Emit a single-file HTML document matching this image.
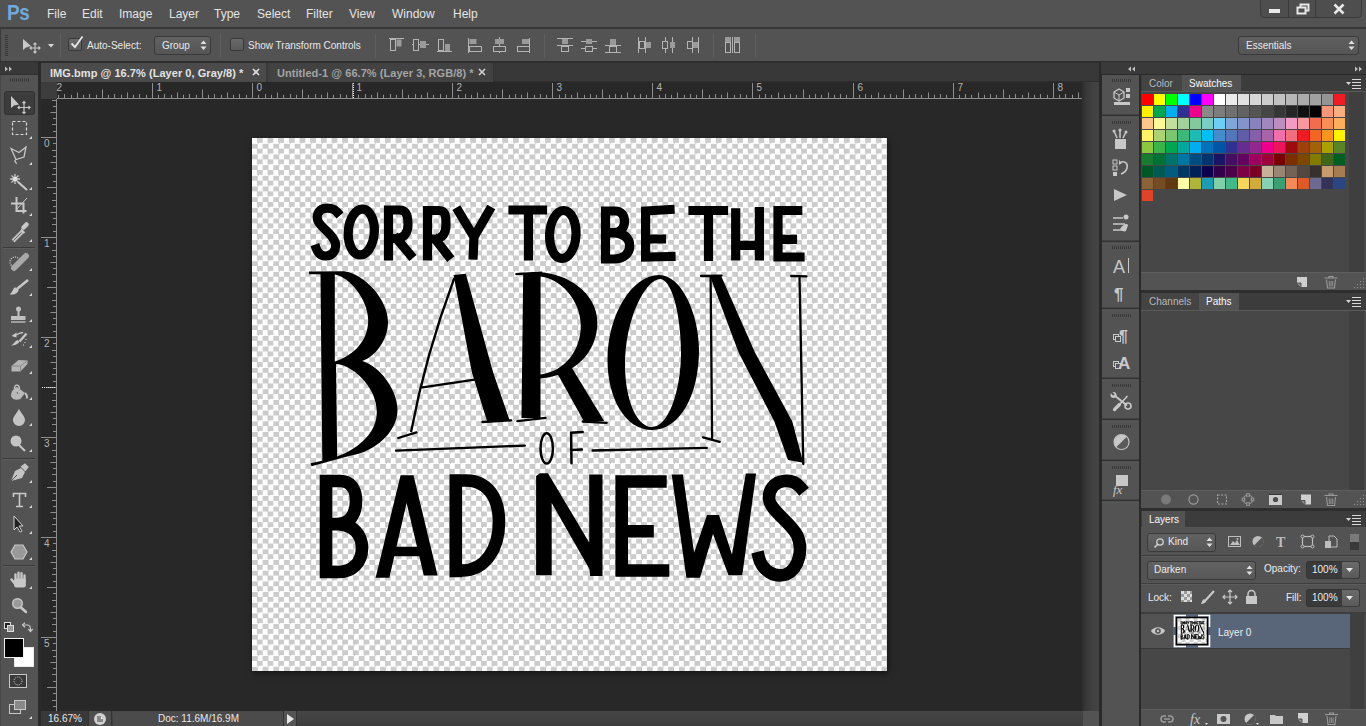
<!DOCTYPE html>
<html><head><meta charset="utf-8">
<style>
*{margin:0;padding:0;box-sizing:border-box}
html,body{width:1366px;height:726px;overflow:hidden;background:#535353;font-family:"Liberation Sans",sans-serif;color:#e6e6e6}
.a{position:absolute}
svg{position:absolute;overflow:visible}
#menubar{left:0;top:0;width:1366px;height:28px;background:#535353}
.mi{position:absolute;top:7px;font-size:12px;color:#e4e4e4}
#optbar{left:0;top:29px;width:1366px;height:33px;background:#535353}
.ot{position:absolute;font-size:10px;color:#e8e8e8}
.vsep{position:absolute;width:1px;background:#3a3a3a;border-right:1px solid #5e5e5e}
#toolbar{left:0;top:62px;width:38px;height:664px;background:#535353}
#docwin{left:41px;top:62px;width:1058px;height:664px;background:#282828}
#tabbar{left:41px;top:62px;width:1058px;height:20px;background:#3a3a3a}
#hruler{left:41px;top:82px;width:1042px;height:17px;background:#282828}
#vruler{left:41px;top:82px;width:16px;height:629px;background:#282828}
#corner{left:41px;top:82px;width:16px;height:17px;background:#3c3c3c}
#vscroll{left:1082px;top:82px;width:17px;height:629px;background:linear-gradient(90deg,#2c2c2c,#383838 25%,#404040 60%,#444)}
#status{left:41px;top:711px;width:1042px;height:15px;background:linear-gradient(#474747,#3c3c3c)}
#doc{left:252px;top:138px;width:635px;height:533px;background:repeating-conic-gradient(#cbcbcb 0 25%,#fff 0 50%) 0 0/10.685px 10.685px;box-shadow:1px 2px 6px rgba(0,0,0,.55)}
#dock{left:1099px;top:62px;width:267px;height:664px;background:#2a2a2a}
#dockhead{left:1101px;top:62px;width:265px;height:12px;background:#393939}
#iconstrip{left:1102px;top:75px;width:37px;height:651px;background:#535353}
#panels{left:1141px;top:75px;width:225px;height:651px;background:#535353}
</style></head><body>
<!-- MENU BAR -->
<div class="a" id="menubar">
<span class="mi" style="left:7px;top:0px;font-size:22px;font-weight:bold;color:#72a8dc;letter-spacing:-0.5px;transform:scaleX(0.86);transform-origin:0 0">Ps</span>
<span class="mi" style="left:47px">File</span>
<span class="mi" style="left:82px">Edit</span>
<span class="mi" style="left:119px">Image</span>
<span class="mi" style="left:169px">Layer</span>
<span class="mi" style="left:214px">Type</span>
<span class="mi" style="left:257px">Select</span>
<span class="mi" style="left:306px">Filter</span>
<span class="mi" style="left:349px">View</span>
<span class="mi" style="left:392px">Window</span>
<span class="mi" style="left:453px">Help</span>
<!-- window buttons -->
<div class="a" style="left:1260px;top:-2px;width:102px;height:20px;background:#4e4e4e;border:1px solid #3a3a3a;border-radius:0 0 4px 4px"></div>
<div class="a" style="left:1288px;top:0;width:1px;height:18px;background:#3a3a3a"></div>
<div class="a" style="left:1315px;top:0;width:1px;height:18px;background:#3a3a3a"></div>
<div class="a" style="left:1269px;top:9px;width:11px;height:4px;background:#e8e8e8"></div>
<svg style="left:1296px;top:3px" width="14" height="12"><rect x="4.5" y="1.5" width="8" height="6" fill="none" stroke="#e8e8e8" stroke-width="2"/><rect x="1.5" y="4.5" width="8" height="6" fill="#4e4e4e" stroke="#e8e8e8" stroke-width="2"/></svg>
<svg style="left:1333px;top:3px" width="12" height="12"><path d="M1.5 1.5L10.5 10.5M10.5 1.5L1.5 10.5" stroke="#e8e8e8" stroke-width="2.5"/></svg>
</div>
<div class="a" style="left:0;top:27px;width:1366px;height:2px;background:#383838"></div>
<div class="a" style="left:0;top:29px;width:1366px;height:1px;background:#5a5a5a"></div>
<!-- OPTIONS BAR -->
<div class="a" id="optbar">
<svg style="left:5px;top:6px" width="4" height="22"><path d="M0 0.5h3M0 2.5h3M0 4.5h3M0 6.5h3M0 8.5h3M0 10.5h3M0 12.5h3M0 14.5h3M0 16.5h3M0 18.5h3M0 20.5h3" stroke="#383838" stroke-width="1"/></svg><div class="a" style="left:0;top:0;width:1px;height:33px;background:#3a3a3a"></div>
<svg style="left:22px;top:9px" width="20" height="16"><path d="M1 1L1 12L4 9.5L9 8Z" fill="#c8c8c8"/><path d="M13 5v10M8 10h10M11.5 6.5L13 5L14.5 6.5M11.5 13.5L13 15L14.5 13.5M9.5 8.5L8 10L9.5 11.5M16.5 8.5L18 10L16.5 11.5" stroke="#c8c8c8" stroke-width="1.1" fill="none"/></svg>
<svg style="left:48px;top:15px" width="7" height="4"><path d="M0 0h6L3 3.5Z" fill="#d8d8d8"/></svg>
<div class="vsep" style="left:60px;top:5px;height:24px"></div>
<div class="a" style="left:68px;top:9px;width:14px;height:13px;background:linear-gradient(#6a6a6a,#5a5a5a);border:1px solid #3a3a3a;border-radius:2px"></div>
<svg style="left:69px;top:5px" width="16" height="16"><path d="M2.5 9.5L6 13L13.5 2.5" stroke="#e8e8e8" stroke-width="1.8" fill="none"/></svg>
<span class="ot" style="left:87px;top:11px">Auto-Select:</span>
<div class="a" style="left:154px;top:7px;width:57px;height:19px;background:linear-gradient(#626262,#555);border:1px solid #3a3a3a;border-radius:3px"></div>
<span class="ot" style="left:162px;top:11px">Group</span>
<svg style="left:200px;top:11px" width="7" height="11"><path d="M0.5 4L3.5 0.5L6.5 4ZM0.5 6.5L3.5 10L6.5 6.5Z" fill="#e0e0e0"/></svg>
<div class="vsep" style="left:220px;top:5px;height:24px"></div>
<div class="a" style="left:230px;top:9px;width:14px;height:13px;background:linear-gradient(#6a6a6a,#5a5a5a);border:1px solid #3a3a3a;border-radius:2px"></div>
<span class="ot" style="left:248px;top:11px">Show Transform Controls</span>
<div class="vsep" style="left:375px;top:5px;height:24px"></div>
<svg style="left:386px;top:8px" width="160" height="16" fill="none" stroke="#b4b4b4" stroke-width="1">
 <path d="M3 1.5h15"/><rect x="4.5" y="2.5" width="5" height="11"/><rect x="10.5" y="2.5" width="5" height="7" fill="#9a9a9a" stroke="none"/>
 <path d="M26 7.5h17"/><rect x="27.5" y="2.5" width="5" height="11" fill="#535353"/><rect x="34" y="4" width="6" height="7" fill="#9a9a9a" stroke="none"/>
 <path d="M51 14.5h15"/><rect x="52.5" y="2.5" width="5" height="11"/><rect x="59" y="7" width="5" height="7" fill="#9a9a9a" stroke="none"/>
 <path d="M82.5 1v15"/><rect x="83.5" y="2" width="7" height="5" fill="#9a9a9a" stroke="none"/><rect x="83.5" y="9.5" width="12" height="5"/>
 <path d="M113.5 0v16"/><rect x="109" y="2" width="9" height="5" fill="#9a9a9a" stroke="none"/><rect x="107.5" y="9.5" width="12" height="5" fill="#535353"/>
 <path d="M143.5 1v15"/><rect x="136" y="2" width="7" height="5" fill="#9a9a9a" stroke="none"/><rect x="131.5" y="9.5" width="12" height="5"/>
</svg>
<div class="vsep" style="left:544px;top:5px;height:24px"></div>
<svg style="left:556px;top:8px" width="200" height="16" fill="none" stroke="#b4b4b4" stroke-width="1">
 <path d="M1 1.5h16M1 8.5h16"/><rect x="6" y="2" width="6" height="5" fill="#9a9a9a" stroke="none"/><rect x="5.5" y="9.5" width="7" height="5"/>
 <path d="M25 4.5h16M25 11.5h16"/><rect x="30" y="2" width="6" height="5" fill="#9a9a9a" stroke="none"/><rect x="29.5" y="9.5" width="7" height="5" fill="#535353"/>
 <path d="M49 8.5h16M49 15.5h16"/><rect x="54" y="2" width="6" height="6" fill="#9a9a9a" stroke="none"/><rect x="53.5" y="9.5" width="7" height="6"/>
 <path d="M82.5 0v16M89.5 0v16"/><rect x="83.5" y="4.5" width="5" height="7"/><rect x="90" y="5" width="5" height="6" fill="#9a9a9a" stroke="none"/>
 <path d="M109.5 0v16M116.5 0v16"/><rect x="106.5" y="4.5" width="5" height="7" fill="#535353"/><rect x="114" y="5" width="5" height="6" fill="#9a9a9a" stroke="none"/>
 <path d="M136.5 0v16M142.5 0v16"/><rect x="131.5" y="4.5" width="5" height="7"/><rect x="137" y="5" width="5" height="6" fill="#9a9a9a" stroke="none"/>
</svg>
<div class="vsep" style="left:713px;top:5px;height:24px"></div>
<svg style="left:724px;top:7px" width="20" height="18" fill="none" stroke="#b4b4b4" stroke-width="1">
 <rect x="1" y="1" width="6" height="5" fill="#9a9a9a" stroke="none"/><rect x="10" y="1" width="6" height="5" fill="#9a9a9a" stroke="none"/>
 <rect x="1.5" y="6.5" width="5" height="10"/><rect x="10.5" y="6.5" width="5" height="10"/><path d="M8.5 1v16"/>
</svg>
<div class="vsep" style="left:755px;top:5px;height:24px"></div>
<div class="a" style="left:1238px;top:7px;width:121px;height:19px;background:linear-gradient(#606060,#555);border:1px solid #3a3a3a;border-radius:3px"></div>
<span class="ot" style="left:1246px;top:11px">Essentials</span>
<svg style="left:1348px;top:11px" width="7" height="11"><path d="M0.5 4L3.5 0.5L6.5 4ZM0.5 6.5L3.5 10L6.5 6.5Z" fill="#e0e0e0"/></svg>
</div>
<div class="a" style="left:0;top:61px;width:1366px;height:1px;background:#2e2e2e"></div>


<!-- TOOLBAR -->
<div class="a" style="left:0;top:62px;width:38px;height:664px;background:#535353;border-left:1px solid #484848"></div>
<div class="a" style="left:0;top:62px;width:38px;height:13px;background:#383838;border-bottom:1px solid #2f2f2f"></div>
<svg style="left:0;top:0" width="38" height="726">
<path d="M5 66.5l3 2.5-3 2.5zM9 66.5l3 2.5-3 2.5z" fill="#bdbdbd"/>
<path d="M10.5 78.5v3M12.5 78.5v3M14.5 78.5v3M16.5 78.5v3M18.5 78.5v3M20.5 78.5v3M22.5 78.5v3M24.5 78.5v3M26.5 78.5v3M28.5 78.5v3" stroke="#383838" stroke-width="1"/>
<path d="M3 247.5h32M3 458.5h32M3 565.5h32" stroke="#3a3a3a"/><path d="M3 248.5h32M3 459.5h32M3 566.5h32" stroke="#5c5c5c"/>
<rect x="4.5" y="91.5" width="30" height="23" rx="2" fill="#3c3c3c" stroke="#303030"/>
<g fill="#c8c8c8">
<path d="M29 139h3v-3zM29 165h3v-3zM29 190h3v-3zM29 216h3v-3zM29 242h3v-3zM29 271h3v-3zM29 296h3v-3zM29 322h3v-3zM29 348h3v-3zM29 374h3v-3zM29 400h3v-3zM29 426h3v-3zM29 452h3v-3zM29 483h3v-3zM29 508h3v-3zM29 534h3v-3zM29 560h3v-3zM29 589h3v-3z" fill="#d8d8d8"/>
<!-- move -->
<path d="M11 96v12l3-2.5 5-1z"/>
</g>
<g fill="none" stroke="#c8c8c8" stroke-width="1.2">
<path d="M24 101.5v12M18 107.5h12M22.5 103l1.5-1.5 1.5 1.5M22.5 112l1.5 1.5 1.5-1.5M19.5 106l-1.5 1.5 1.5 1.5M28.5 106l1.5 1.5-1.5 1.5"/>
<!-- marquee -->
<rect x="12.5" y="121.5" width="14" height="13" stroke-dasharray="3 2" stroke="#d8d8d8"/>
<!-- lasso -->
<path d="M11 148.5l8 4 7-5.5-2 10-8 2.5zM16 159.5c-2 1-1 3 1 4" stroke-width="1.3"/>
<!-- wand -->
<path d="M18 182l9 8" stroke-width="2.2"/>
<path d="M15 174v10M10 179h10M11.5 175.5l7 7M18.5 175.5l-7 7" stroke-width="1.3"/><circle cx="15" cy="179" r="2.2" fill="#e0e0e0" stroke="none"/>
<!-- crop -->
<path d="M16.5 197v14h10M11 203.5h12.5v10" stroke-width="2"/>
<path d="M27 198l-11 12" stroke-width="1"/>
<!-- eyedropper -->
<path d="M13 241l9.5-9.5" stroke-width="4" stroke="#c0c0c0"/>
<path d="M13.5 240.5l8-8" stroke-width="1" stroke="#666"/>
<path d="M21 229.5l3.5 3.5" stroke-width="2" stroke="#c8c8c8"/>
<path d="M23.5 227.5l3-3" stroke-width="4.5" stroke-linecap="round"/>
<!-- healing -->
<circle cx="15" cy="262" r="5" stroke-dasharray="1 1.3" stroke="#e0e0e0"/>
<path d="M14 268l12-12" stroke-width="6" stroke-linecap="round" stroke="#a8a8a8"/>
<!-- brush -->
<path d="M17 289l11-9" stroke-width="2.5"/>
<path d="M11 294c3 0 6-1 7-4l-3-2c-2 2-2 4-4 6z" fill="#c8c8c8"/>
<!-- stamp -->
<circle cx="18.5" cy="309" r="2.5" fill="#c0c0c0" stroke="none"/><path d="M18.5 310v6" stroke-width="2" stroke="#c0c0c0"/>
<rect x="11" y="316" width="14.5" height="4" fill="#c0c0c0" stroke="none"/><path d="M11 322h14.5" stroke="#d0d0d0"/>
<!-- history -->
<path d="M11.5 336L16.5 332.5L16.5 337.5Z" fill="#c8c8c8" stroke="none"/><path d="M16 335Q19 333 23 332.5" stroke-width="1.3"/>
<path d="M26.5 333.5L19.5 341.5" stroke-width="2.2"/><path d="M11 345.5C14 345.5 18 344.5 19.5 341.5L17.5 340C15 341 14 344 11 345.5Z" fill="#c8c8c8" stroke="none"/>
<path d="M26 339v1M25 342v1M23.5 344.5v1" stroke-width="1" stroke="#dcdcdc"/>
<!-- eraser -->
<path d="M11.5 366L18.5 360L27.5 360.5L27.5 364L20.5 371.5L11.5 371.5Z" fill="#b4b4b4" stroke="none"/><path d="M11.5 366H20.5L27.5 360.5M20.5 366V371.5" stroke="#8a8a8a" stroke-width="1"/>
<!-- bucket -->
<path d="M11 396C11 391 14 388.5 17 387L25 393L20.5 399C16 400.5 12 399.5 11 396Z" fill="#b8b8b8" stroke="none"/>
<path d="M14.5 389C14 384 19.5 383.5 19.5 389" stroke-width="1.3"/><path d="M25 393C27 395 27.5 397 26.5 398.5" stroke-width="1.8"/><path d="M17 392l1 2" stroke="#666" stroke-width="1"/>
<!-- drop -->
<path d="M19 409c-3 5-6 8-6 11a6 6 0 0 0 12 0c0-3-3-6-6-11z" fill="#c4c4c4" stroke="none"/>
<!-- dodge -->
<circle cx="16" cy="441" r="5.5" fill="#c4c4c4" stroke="none"/><path d="M19 445l6 6" stroke-width="2"/>
<!-- pen -->
<path d="M11 481l4-10 6-3 4 4-3 6z" fill="#c4c4c4" stroke="none"/><path d="M21 467l4-3 3 3-3 4" fill="#c4c4c4" stroke="#c4c4c4"/><path d="M11 481l6-6" stroke="#535353" stroke-width="1"/>
<!-- type -->
<path d="M13.5 497v-3.5h12v3.5M19.5 493.5v13M16 506.5h7" stroke-width="1.6"/>
<!-- path select -->
<path d="M14 516v14l3-3 3 5 2-1-3-5h4z" fill="#222" stroke="#d0d0d0" stroke-width="1"/>
<!-- shape -->
<path d="M15 545h8l4 7-4 7h-8l-4-7z" fill="#9a9a9a" stroke="#c8c8c8"/>
<!-- hand -->
<path d="M15.5 581V574.5M18.5 581V572.8M21.5 581V573.3M24.5 581V575.5" stroke-width="2.4" stroke-linecap="round"/>
<rect x="14.2" y="578.5" width="11.6" height="9" rx="2" fill="#c8c8c8" stroke="none"/><path d="M15.5 584.5L11.5 579.5" stroke-width="2.4" stroke-linecap="round"/>
<!-- zoom -->
<circle cx="17.5" cy="603.5" r="4.8" fill="#9a9a9a" stroke="#c8c8c8" stroke-width="1.4"/><path d="M21 607.5l5 4.5" stroke-width="2.6" stroke-linecap="round"/>
<!-- default colors -->
<rect x="4.5" y="622.5" width="6" height="6" fill="#222" stroke="#ddd" stroke-width="1"/><rect x="7.5" y="625.5" width="6" height="6" fill="#999" stroke="#ddd" stroke-width="1"/>
<path d="M23.5 625H27C29.5 625 30.5 626.5 30.5 629V631" stroke-width="1.2"/><path d="M25 622.8L22.5 625L25 627.2M28.3 629L30.5 631.5L32.7 629" stroke-width="1.2"/>
</g>
<!-- fg/bg -->
<rect x="14.5" y="647.5" width="19" height="19" fill="#fff" stroke="#e8e8e8"/>
<rect x="4.5" y="638.5" width="19" height="19" fill="#000" stroke="#f0f0f0"/>
<!-- quick mask -->
<rect x="9.5" y="674.5" width="17" height="13" fill="#3a3a3a" stroke="#c8c8c8"/><circle cx="18" cy="681" r="4" fill="none" stroke="#e0e0e0" stroke-dasharray="1 1.2"/>
<!-- screen mode -->
<rect x="9.5" y="704.5" width="11" height="9" fill="#555" stroke="#c8c8c8"/><rect x="14.5" y="700.5" width="11" height="9" fill="#888" stroke="#c8c8c8"/>
<path d="M29 719h3v-3z" fill="#d8d8d8"/>
</svg>

<!-- DOC WINDOW -->
<div class="a" style="left:38px;top:62px;width:3px;height:664px;background:#2b2b2b"></div>
<div class="a" style="left:41px;top:62px;width:1058px;height:664px;background:#282828"></div>
<div class="a" style="left:41px;top:62px;width:1058px;height:20px;background:#383838;border-top:1px solid #2e2e2e;border-bottom:1px solid #2e2e2e"></div>
<div class="a" style="left:41px;top:63px;width:226px;height:19px;background:#4b4b4b;border-right:1px solid #3a3a3a"></div>
<div class="a" style="left:268px;top:63px;width:226px;height:19px;background:#424242;border-right:1px solid #333"></div>
<span class="a" style="left:50px;top:67px;font-size:11px;font-weight:bold;color:#e2e2e2;letter-spacing:0.05px">IMG.bmp @ 16.7% (Layer 0, Gray/8) *</span>
<span class="a" style="left:277px;top:67px;font-size:11px;font-weight:bold;color:#a4a4a4;letter-spacing:0.05px">Untitled-1 @ 66.7% (Layer 3, RGB/8) *</span>
<svg style="left:252px;top:68px" width="9" height="9"><path d="M1 1l6 6M7 1l-6 6" stroke="#e0e0e0" stroke-width="1.6"/></svg>
<svg style="left:478px;top:68px" width="9" height="9"><path d="M1 1l6 6M7 1l-6 6" stroke="#d0d0d0" stroke-width="1.6"/></svg>
<div class="a" style="left:41px;top:82px;width:16px;height:17px;background:#3d3d3d"></div>
<svg style="left:0;top:0" width="1100" height="100"><path d="M58.5 94.8V98M64.5 94V98M71.5 94.8V98M77.5 92.5V98M83.5 94.8V98M89.5 94V98M96.5 94.8V98M102.5 89.5V98M108.5 94.8V98M114.5 94V98M121.5 94.8V98M127.5 92.5V98M133.5 94.8V98M139.5 94V98M146.5 94.8V98M152.5 83V98M158.5 94.8V98M164.5 94V98M171.5 94.8V98M177.5 92.5V98M183.5 94.8V98M189.5 94V98M196.5 94.8V98M202.5 89.5V98M208.5 94.8V98M214.5 94V98M221.5 94.8V98M227.5 92.5V98M233.5 94.8V98M239.5 94V98M246.5 94.8V98M252.5 83V98M258.5 94.8V98M265.5 94V98M271.5 94.8V98M277.5 92.5V98M283.5 94.8V98M290.5 94V98M296.5 94.8V98M302.5 89.5V98M308.5 94.8V98M315.5 94V98M321.5 94.8V98M327.5 92.5V98M333.5 94.8V98M340.5 94V98M346.5 94.8V98M352.5 83V98M358.5 94.8V98M365.5 94V98M371.5 94.8V98M377.5 92.5V98M383.5 94.8V98M390.5 94V98M396.5 94.8V98M402.5 89.5V98M408.5 94.8V98M415.5 94V98M421.5 94.8V98M427.5 92.5V98M433.5 94.8V98M440.5 94V98M446.5 94.8V98M452.5 83V98M458.5 94.8V98M465.5 94V98M471.5 94.8V98M477.5 92.5V98M483.5 94.8V98M490.5 94V98M496.5 94.8V98M502.5 89.5V98M509.5 94.8V98M515.5 94V98M521.5 94.8V98M527.5 92.5V98M534.5 94.8V98M540.5 94V98M546.5 94.8V98M552.5 83V98M559.5 94.8V98M565.5 94V98M571.5 94.8V98M577.5 92.5V98M584.5 94.8V98M590.5 94V98M596.5 94.8V98M602.5 89.5V98M609.5 94.8V98M615.5 94V98M621.5 94.8V98M627.5 92.5V98M634.5 94.8V98M640.5 94V98M646.5 94.8V98M652.5 83V98M659.5 94.8V98M665.5 94V98M671.5 94.8V98M677.5 92.5V98M684.5 94.8V98M690.5 94V98M696.5 94.8V98M702.5 89.5V98M709.5 94.8V98M715.5 94V98M721.5 94.8V98M727.5 92.5V98M734.5 94.8V98M740.5 94V98M746.5 94.8V98M752.5 83V98M759.5 94.8V98M765.5 94V98M771.5 94.8V98M778.5 92.5V98M784.5 94.8V98M790.5 94V98M796.5 94.8V98M803.5 89.5V98M809.5 94.8V98M815.5 94V98M821.5 94.8V98M828.5 92.5V98M834.5 94.8V98M840.5 94V98M846.5 94.8V98M853.5 83V98M859.5 94.8V98M865.5 94V98M871.5 94.8V98M878.5 92.5V98M884.5 94.8V98M890.5 94V98M896.5 94.8V98M903.5 89.5V98M909.5 94.8V98M915.5 94V98M921.5 94.8V98M928.5 92.5V98M934.5 94.8V98M940.5 94V98M946.5 94.8V98M953.5 83V98M959.5 94.8V98M965.5 94V98M971.5 94.8V98M978.5 92.5V98M984.5 94.8V98M990.5 94V98M996.5 94.8V98M1003.5 89.5V98M1009.5 94.8V98M1015.5 94V98M1022.5 94.8V98M1028.5 92.5V98M1034.5 94.8V98M1040.5 94V98M1047.5 94.8V98M1053.5 83V98M1059.5 94.8V98M1065.5 94V98M1072.5 94.8V98M1078.5 92.5V98" stroke="#8e8e8e" stroke-width="1"/><path d="M57 98.5H1083" stroke="#8e8e8e"/><text x="56.5" y="91" font-size="10" fill="#b4b4b4" font-family="Liberation Sans">2</text><text x="156.5" y="91" font-size="10" fill="#b4b4b4" font-family="Liberation Sans">1</text><text x="256.5" y="91" font-size="10" fill="#b4b4b4" font-family="Liberation Sans">0</text><text x="356.5" y="91" font-size="10" fill="#b4b4b4" font-family="Liberation Sans">1</text><text x="456.5" y="91" font-size="10" fill="#b4b4b4" font-family="Liberation Sans">2</text><text x="556.5" y="91" font-size="10" fill="#b4b4b4" font-family="Liberation Sans">3</text><text x="656.5" y="91" font-size="10" fill="#b4b4b4" font-family="Liberation Sans">4</text><text x="756.5" y="91" font-size="10" fill="#b4b4b4" font-family="Liberation Sans">5</text><text x="857.5" y="91" font-size="10" fill="#b4b4b4" font-family="Liberation Sans">6</text><text x="957.5" y="91" font-size="10" fill="#b4b4b4" font-family="Liberation Sans">7</text><text x="1057.5" y="91" font-size="10" fill="#b4b4b4" font-family="Liberation Sans">8</text></svg>
<svg style="left:0;top:0" width="60" height="726"><path d="M52 100.5H56M53 106.5H56M50.5 112.5H56M53 118.5H56M52 124.5H56M53 131.5H56M41 137.5H56M53 143.5H56M52 150.5H56M53 156.5H56M50.5 162.5H56M53 168.5H56M52 174.5H56M53 181.5H56M47 187.5H56M53 193.5H56M52 200.5H56M53 206.5H56M50.5 212.5H56M53 218.5H56M52 224.5H56M53 231.5H56M41 237.5H56M53 243.5H56M52 250.5H56M53 256.5H56M50.5 262.5H56M53 268.5H56M52 274.5H56M53 281.5H56M47 287.5H56M53 293.5H56M52 300.5H56M53 306.5H56M50.5 312.5H56M53 318.5H56M52 324.5H56M53 331.5H56M41 337.5H56M53 343.5H56M52 350.5H56M53 356.5H56M50.5 362.5H56M53 368.5H56M52 374.5H56M53 381.5H56M47 387.5H56M53 393.5H56M52 400.5H56M53 406.5H56M50.5 412.5H56M53 418.5H56M52 424.5H56M53 431.5H56M41 437.5H56M53 443.5H56M52 450.5H56M53 456.5H56M50.5 462.5H56M53 468.5H56M52 474.5H56M53 481.5H56M47 487.5H56M53 493.5H56M52 500.5H56M53 506.5H56M50.5 512.5H56M53 518.5H56M52 524.5H56M53 531.5H56M41 537.5H56M53 543.5H56M52 550.5H56M53 556.5H56M50.5 562.5H56M53 568.5H56M52 574.5H56M53 581.5H56M47 587.5H56M53 593.5H56M52 600.5H56M53 606.5H56M50.5 612.5H56M53 618.5H56M52 624.5H56M53 631.5H56M41 637.5H56M53 643.5H56M52 650.5H56M53 656.5H56M50.5 662.5H56M53 668.5H56M52 674.5H56M53 681.5H56M47 687.5H56M53 693.5H56M52 700.5H56M53 706.5H56" stroke="#8e8e8e" stroke-width="1"/><path d="M56.5 99V711" stroke="#8e8e8e"/><text x="44" y="147.0" font-size="10" fill="#b4b4b4" font-family="Liberation Sans">0</text><text x="44" y="247.0" font-size="10" fill="#b4b4b4" font-family="Liberation Sans">1</text><text x="44" y="347.0" font-size="10" fill="#b4b4b4" font-family="Liberation Sans">2</text><text x="44" y="447.0" font-size="10" fill="#b4b4b4" font-family="Liberation Sans">3</text><text x="44" y="547.0" font-size="10" fill="#b4b4b4" font-family="Liberation Sans">4</text><text x="44" y="647.0" font-size="10" fill="#b4b4b4" font-family="Liberation Sans">5</text></svg>

<svg style="left:0;top:0" width="400" height="400"><path d="M353.5 83V98" stroke="#f0f0f0" stroke-dasharray="1 1"/><path d="M42 387.5H56" stroke="#f0f0f0" stroke-dasharray="1 1"/></svg>
<div class="a" id="vscroll"></div>
<div class="a" style="left:41px;top:711px;width:1042px;height:15px;background:linear-gradient(#464646,#3d3d3d)"></div>
<div class="a" style="left:41px;top:711px;width:47px;height:15px;background:#393939"></div>
<div class="a" style="left:88px;top:711px;width:24px;height:15px;background:#4e4e4e;border-left:1px solid #333;border-right:1px solid #333"></div>
<div class="a" style="left:113px;top:711px;width:170px;height:15px;background:#4b4b4b"></div>
<div class="a" style="left:283px;top:711px;width:14px;height:15px;background:#555;border-left:1px solid #333;border-right:1px solid #333"></div>
<div class="a" style="left:1083px;top:711px;width:16px;height:15px;background:#535353"></div>
<span class="a" style="left:48px;top:713px;font-size:10px;color:#e8e8e8">16.67%</span>
<svg style="left:93px;top:712px" width="14" height="14"><circle cx="7" cy="7" r="6" fill="#d0d0d0"/><path d="M4 4h4l2 2v4H4z" fill="#888"/><path d="M8 4v3h2" fill="#fff"/></svg>
<span class="a" style="left:158px;top:713px;font-size:10px;color:#e8e8e8">Doc: 11.6M/16.9M</span>
<svg style="left:286px;top:713px" width="10" height="12"><path d="M1 1v10l7-5z" fill="#e8e8e8"/></svg>

<!-- DOCUMENT -->
<div class="a" id="doc"></div>
<svg style="left:0;top:0" width="1366" height="726"><g id="letters">
<g fill="none" stroke="#000" stroke-width="9.2" stroke-linecap="square" stroke-linejoin="miter" stroke-miterlimit="3">
<path d="M337 212C334 208.5 328 207.5 324 208.5C318 210 316 216 318 221C321 228 332 233 335 242C337.5 250 332 256 326 256C321 256 318 253 316.5 249"/>
<ellipse cx="361.3" cy="232" rx="13" ry="23" transform="rotate(4 361.3 232)"/>
<path d="M388.5 256V210H400C406 210 408 215 408 224.5C408 234 403 238.5 396 238.5H388.5M397 239L410 254.5"/>
<path d="M427.5 256V210.5H439C445 210.5 446 215 446 224.5C446 234 442 239 435 239H427.5M436 240L448 255.5"/>
<path d="M458.7 211.5L474 237L489 211M474 237L473.2 255"/>
<path d="M513 210H542.5M528.5 210V256"/>
<ellipse cx="562.8" cy="234.5" rx="13.2" ry="24" transform="rotate(3 562.8 234.5)"/>
<path d="M605.5 259V211H615C621 211 624.5 215 624.5 221.5C624.5 228 620 232.6 614 232.6H606M614 232.6C624 232.6 629.7 238 629.7 246C629.7 254 623 259 614 259H605.5"/>
<path d="M670 209.5L645.6 211V257L671 256.5M645.6 239H661.5"/>
<path d="M693 210.5H723.5M708.5 210.5V256.5"/>
<path d="M735.7 212.8V256M759.4 211.5V256M735.7 245.4H759.4"/>
<path d="M797.7 210.5H778V257H800M778 239.4H792.5"/>
</g>
<g fill="none" stroke="#000" stroke-width="12.6" stroke-linecap="square" stroke-linejoin="miter" stroke-miterlimit="3">
<path d="M326 572V481H340C351 481 356 489 356 501C356 515 349 524 338 524H327M338 524C353 524 362 535 362 548C362 563 352 572 338 572H326"/>

<path d="M455.8 571V480.5H466C487 480.5 499 497 499 522C499 549 485 570.5 462 570.5H455.8"/>

<path d="M660.4 481.5H621.7V570.5H663M621.7 531.3H647.5"/>

<path d="M800 487C795 481 789 480.5 784 481C774 482 768.5 490 769 499C770 510 790 522 797 535C803 548 800 568 786 574.5C774 578 762 570 759 558"/>
</g>
<g fill="#000">
<path fill-rule="evenodd" d="M400.6 475.3L413.5 475.3L437.6 575.5L423.8 575.5L419.3 556.3L394.3 556.3L389.4 577.8L375.6 577.8Z M406.6 502.9L417 546.8L396.5 546.8Z"/>
<path d="M536.1 476L540 473.2L548 473.2L589.2 542.5L589.2 474.5L602.5 474.5L602.5 576L590 576L589.4 569L551.7 503L551.7 575.2L536.1 575.2Z"/>
<path d="M671.7 474.5L682.9 474.5L694.1 552.8L707 515L719 515L732 554.5L745.8 473.6L756.1 473.6L742.3 575.2L728.5 575.2L713 533.9L700 577.8L686.4 577.8Z"/>
<path fill-rule="evenodd" d="M309 271.5L344 271.3C365 274 388 300 388 322C388 340 375 357 362 361C380 366 397.5 390 397.5 410C397.5 432 375 452 349 456L311.5 466.2L310.5 463.3L322.3 460.7L320.5 274.3L309 274.2Z M334.8 274.5C350 277 368 300 368.2 320C368.2 340 355 355 334.8 361.5Z M336 364C350 364 376.8 385 376.8 412C376.8 432 360 448 337.2 456.5Z"/>
<path d="M453.6 275L465.8 273.8L493 372L509.7 420.6L487 421L471.8 372Z"/>
<path d="M523.2 273.5L540.6 273L540.5 418L521.5 418Z"/>
<path d="M540 272.6C565 273 597.4 292 597.4 322.6C597.4 352 575 376 540 378.5L540 374.5C565 372 580.8 350 580.8 325.6C580.8 300 560 278 540 276.5Z"/>
<path d="M556.2 371.5L571.1 366.6L604.2 421L584.3 422Z"/>
<path fill-rule="evenodd" d="M659 275C682 275 699 315 699 350C699 395 680 430 652 430C625 430 607.5 398 607.5 360C607.5 315 632 275 659 275Z M660.6 279C673 281 681 318 681 352C681 392 668 427 652 427C636 427 625 398 625 365C625 320 645 279 660.6 279Z"/>
<path d="M709.6 275L720.7 275L755 352.6L792.3 421.5L803.3 462.8L788 460L774.4 421.5L738.6 352.6Z"/>
</g>
<g fill="none" stroke="#000" stroke-width="2.3" stroke-linecap="round">
<path d="M454 279Q425.6 355 411.2 431.2M398.3 438L416.5 432.4M422.6 387.3L474.8 379.7M482.4 422L511.2 420.3"/>
<path d="M516.4 274.1L541.4 272.6M517.4 421.1L545.5 417.8M582.7 421.5L606.7 422.8"/>
<path d="M701 276L721.5 275.6M710.6 276L712.1 438.8M703 437.3L719.7 441.8M799.5 276.4L803.3 464M791.2 276L806.4 276.4"/>
<path d="M396 450.6L524.8 445.6M592.6 450.5L706.8 447.9"/>
<ellipse cx="546.7" cy="448.4" rx="6.2" ry="15.2" stroke-width="2.5"/>
<path d="M571.5 463.3L571.1 432.7L582.7 432M571 450L581.9 449.5" stroke-width="2.5"/>
</g>
</g></svg>

<!-- DOCK -->
<div class="a" style="left:1099px;top:62px;width:267px;height:664px;background:#2a2a2a"></div>
<div class="a" style="left:1101px;top:62px;width:265px;height:12px;background:#3a3a3a"></div>
<svg style="left:1101px;top:62px" width="265" height="12"><path d="M34 4.5l-3 2.5 3 2.5zM30 4.5l-3 2.5 3 2.5z" fill="#c0c0c0"/><path d="M254 4.5l3 2.5-3 2.5zM258 4.5l3 2.5-3 2.5z" fill="#c0c0c0"/></svg>
<div class="a" style="left:1102px;top:75px;width:37px;height:651px;background:#535353"></div>
<svg style="left:1102px;top:0" width="37" height="726"><path d="M0 115.5h37" stroke="#333" stroke-width="2"/><path d="M0 117h37" stroke="#5e5e5e" stroke-width="1"/><path d="M0 241.5h37" stroke="#333" stroke-width="2"/><path d="M0 243h37" stroke="#5e5e5e" stroke-width="1"/><path d="M0 308.5h37" stroke="#333" stroke-width="2"/><path d="M0 310h37" stroke="#5e5e5e" stroke-width="1"/><path d="M0 378.5h37" stroke="#333" stroke-width="2"/><path d="M0 380h37" stroke="#5e5e5e" stroke-width="1"/><path d="M0 419.5h37" stroke="#333" stroke-width="2"/><path d="M0 421h37" stroke="#5e5e5e" stroke-width="1"/><path d="M0 460.5h37" stroke="#333" stroke-width="2"/><path d="M0 462h37" stroke="#5e5e5e" stroke-width="1"/><path d="M0 500.5h37" stroke="#333" stroke-width="2"/><path d="M0 502h37" stroke="#5e5e5e" stroke-width="1"/><path d="M10.5 79v3M12.5 79v3M14.5 79v3M16.5 79v3M18.5 79v3M20.5 79v3M22.5 79v3M24.5 79v3M26.5 79v3M28.5 79v3" stroke="#383838"/><path d="M10.5 121v3M12.5 121v3M14.5 121v3M16.5 121v3M18.5 121v3M20.5 121v3M22.5 121v3M24.5 121v3M26.5 121v3M28.5 121v3" stroke="#383838"/><path d="M10.5 246v3M12.5 246v3M14.5 246v3M16.5 246v3M18.5 246v3M20.5 246v3M22.5 246v3M24.5 246v3M26.5 246v3M28.5 246v3" stroke="#383838"/><path d="M10.5 314v3M12.5 314v3M14.5 314v3M16.5 314v3M18.5 314v3M20.5 314v3M22.5 314v3M24.5 314v3M26.5 314v3M28.5 314v3" stroke="#383838"/><path d="M10.5 384v3M12.5 384v3M14.5 384v3M16.5 384v3M18.5 384v3M20.5 384v3M22.5 384v3M24.5 384v3M26.5 384v3M28.5 384v3" stroke="#383838"/><path d="M10.5 425v3M12.5 425v3M14.5 425v3M16.5 425v3M18.5 425v3M20.5 425v3M22.5 425v3M24.5 425v3M26.5 425v3M28.5 425v3" stroke="#383838"/><path d="M10.5 466v3M12.5 466v3M14.5 466v3M16.5 466v3M18.5 466v3M20.5 466v3M22.5 466v3M24.5 466v3M26.5 466v3M28.5 466v3" stroke="#383838"/><g fill="#c8c8c8" stroke="none">
<path d="M12 92l5-3 5 3v6l-5 3-5-3z" fill="none" stroke="#c8c8c8" stroke-width="1.3"/><path d="M12 92l5 3 5-3M17 95v6" fill="none" stroke="#c8c8c8" stroke-width="1"/>
<rect x="24" y="88" width="4" height="4"/><rect x="24" y="94" width="4" height="4"/><rect x="12" y="102" width="16" height="3"/>
<path d="M13 139h11v10h-11z"/><path d="M15 138l-3-7M18 138v-8M21 138l3-6" stroke="#c8c8c8" stroke-width="1.5" fill="none"/><circle cx="12" cy="131" r="1.5"/><circle cx="18" cy="130" r="1.5"/><circle cx="24" cy="132" r="1.5"/>
<rect x="11" y="160" width="4" height="4" fill="none" stroke="#c8c8c8"/><rect x="11" y="166" width="4" height="4" fill="none" stroke="#c8c8c8"/><rect x="11" y="172" width="4" height="4"/>
<path d="M19 162c5-1 7 2 6 6s-3 5-6 6" fill="none" stroke="#c8c8c8" stroke-width="1.6"/><path d="M17 160l3 3-3 2z"/>
<path d="M12 189l13 6-13 6z"/>
<path d="M11 218h10M11 224h12M11 230h12" stroke="#c8c8c8" stroke-width="1.4"/><circle cx="24" cy="217" r="2.5"/><path d="M18 229c3-5 7-6 8-4l-2 6c-2 1-4 0-6-2z"/>
</g>
<text x="11" y="273" font-size="18" font-family="Liberation Sans" fill="#c8c8c8">A</text><path d="M26.5 258v15" stroke="#c8c8c8" stroke-width="1"/>
<text x="12" y="300" font-size="17" font-family="Liberation Sans" font-weight="bold" fill="#c8c8c8">¶</text>
<rect x="11.5" y="334.5" width="5" height="5" fill="none" stroke="#c8c8c8"/><rect x="13.5" y="336.5" width="5" height="5" fill="#535353" stroke="#c8c8c8"/>
<text x="17" y="342" font-size="16" font-family="Liberation Sans" font-weight="bold" fill="#c8c8c8">¶</text>
<rect x="11.5" y="361.5" width="5" height="5" fill="none" stroke="#c8c8c8"/><rect x="13.5" y="363.5" width="5" height="5" fill="#535353" stroke="#c8c8c8"/>
<text x="16" y="369" font-size="17" font-family="Liberation Sans" font-weight="bold" fill="#c8c8c8">A</text>
<path d="M12 395l13 10.5" stroke="#c8c8c8" stroke-width="2"/><circle cx="11.5" cy="395" r="3" fill="#c8c8c8"/><path d="M9 392l3 3" stroke="#535353" stroke-width="2"/><circle cx="26" cy="406" r="3" fill="none" stroke="#c8c8c8" stroke-width="1.6"/><path d="M12.5 409.5l5-5" stroke="#c8c8c8" stroke-width="3.2" stroke-linecap="round"/><path d="M17.5 404.5l8-8.5" stroke="#c8c8c8" stroke-width="1.5"/>
<circle cx="19.5" cy="442" r="7.5" fill="#5a5a5a" stroke="#c0c0c0" stroke-width="1.2"/><path d="M14.2 447.3L24.8 436.7A7.5 7.5 0 0 0 14.2 447.3Z" fill="#c8c8c8"/>
<rect x="14" y="475" width="12" height="11" fill="#c8c8c8"/><text x="11" y="494" font-size="13" font-style="italic" font-family="Liberation Serif" fill="#c8c8c8">fx</text>
</svg>
<div class="a" style="left:1139px;top:75px;width:2px;height:651px;background:#2a2a2a"></div>
<div class="a" style="left:1141px;top:75px;width:225px;height:16px;background:#3c3c3c"></div>
<div class="a" style="left:1142px;top:75px;width:40px;height:16px;background:#444"></div>
<div class="a" style="left:1182px;top:75px;width:59px;height:17px;background:#535353"></div>
<span class="a" style="left:1149px;top:78px;font-size:10px;color:#b8b8b8">Color</span>
<span class="a" style="left:1189px;top:78px;font-size:10px;color:#fafafa">Swatches</span>
<svg style="left:1345px;top:78px" width="18" height="11"><path d="M1 4h5l-2.5 3z" fill="#d8d8d8"/><path d="M7 1.5h9M7 4.5h9M7 7.5h9M7 10.5h9" stroke="#d8d8d8" stroke-width="1.2"/></svg>
<div class="a" style="left:1141px;top:91px;width:225px;height:181px;background:#474747;border-top:1px solid #5a5a5a"></div>
<div class="a" style="left:1349px;top:92px;width:15px;height:180px;background:#3f3f3f"></div>

<svg style="left:1141px;top:93px" width="210" height="110"><rect x="1" y="1" width="11" height="11" fill="#ff0000"/><rect x="13" y="1" width="11" height="11" fill="#ffff00"/><rect x="25" y="1" width="11" height="11" fill="#00ff00"/><rect x="37" y="1" width="11" height="11" fill="#00ffff"/><rect x="49" y="1" width="11" height="11" fill="#0000ff"/><rect x="61" y="1" width="11" height="11" fill="#ff00ff"/><rect x="73" y="1" width="11" height="11" fill="#ffffff"/><rect x="85" y="1" width="11" height="11" fill="#ebebeb"/><rect x="97" y="1" width="11" height="11" fill="#e1e1e1"/><rect x="109" y="1" width="11" height="11" fill="#d7d7d7"/><rect x="121" y="1" width="11" height="11" fill="#cccccc"/><rect x="133" y="1" width="11" height="11" fill="#c2c2c2"/><rect x="145" y="1" width="11" height="11" fill="#b7b7b7"/><rect x="157" y="1" width="11" height="11" fill="#acacac"/><rect x="169" y="1" width="11" height="11" fill="#a0a0a0"/><rect x="181" y="1" width="11" height="11" fill="#959595"/><rect x="193" y="1" width="11" height="11" fill="#ee1d24"/><rect x="1" y="13" width="11" height="11" fill="#fff100"/><rect x="13" y="13" width="11" height="11" fill="#00a650"/><rect x="25" y="13" width="11" height="11" fill="#00aeef"/><rect x="37" y="13" width="11" height="11" fill="#2e3192"/><rect x="49" y="13" width="11" height="11" fill="#ec008c"/><rect x="61" y="13" width="11" height="11" fill="#898989"/><rect x="73" y="13" width="11" height="11" fill="#7d7d7d"/><rect x="85" y="13" width="11" height="11" fill="#707070"/><rect x="97" y="13" width="11" height="11" fill="#626262"/><rect x="109" y="13" width="11" height="11" fill="#555555"/><rect x="121" y="13" width="11" height="11" fill="#464646"/><rect x="133" y="13" width="11" height="11" fill="#363636"/><rect x="145" y="13" width="11" height="11" fill="#262626"/><rect x="157" y="13" width="11" height="11" fill="#111111"/><rect x="169" y="13" width="11" height="11" fill="#000000"/><rect x="181" y="13" width="11" height="11" fill="#f7977a"/><rect x="193" y="13" width="11" height="11" fill="#f9ad81"/><rect x="1" y="25" width="11" height="11" fill="#fdc68a"/><rect x="13" y="25" width="11" height="11" fill="#fff79a"/><rect x="25" y="25" width="11" height="11" fill="#c4df9b"/><rect x="37" y="25" width="11" height="11" fill="#a2d39c"/><rect x="49" y="25" width="11" height="11" fill="#82ca9d"/><rect x="61" y="25" width="11" height="11" fill="#7bcdc8"/><rect x="73" y="25" width="11" height="11" fill="#6ecff6"/><rect x="85" y="25" width="11" height="11" fill="#7ea7d8"/><rect x="97" y="25" width="11" height="11" fill="#8493ca"/><rect x="109" y="25" width="11" height="11" fill="#8882be"/><rect x="121" y="25" width="11" height="11" fill="#a187be"/><rect x="133" y="25" width="11" height="11" fill="#bc8dbf"/><rect x="145" y="25" width="11" height="11" fill="#f49ac2"/><rect x="157" y="25" width="11" height="11" fill="#f6989d"/><rect x="169" y="25" width="11" height="11" fill="#f26c4f"/><rect x="181" y="25" width="11" height="11" fill="#f68e55"/><rect x="193" y="25" width="11" height="11" fill="#fbaf5c"/><rect x="1" y="37" width="11" height="11" fill="#fff467"/><rect x="13" y="37" width="11" height="11" fill="#acd372"/><rect x="25" y="37" width="11" height="11" fill="#7dc473"/><rect x="37" y="37" width="11" height="11" fill="#3cb878"/><rect x="49" y="37" width="11" height="11" fill="#1cbbb4"/><rect x="61" y="37" width="11" height="11" fill="#00bff3"/><rect x="73" y="37" width="11" height="11" fill="#448ccb"/><rect x="85" y="37" width="11" height="11" fill="#5574b9"/><rect x="97" y="37" width="11" height="11" fill="#605ca8"/><rect x="109" y="37" width="11" height="11" fill="#8560a8"/><rect x="121" y="37" width="11" height="11" fill="#a864a8"/><rect x="133" y="37" width="11" height="11" fill="#f06eaa"/><rect x="145" y="37" width="11" height="11" fill="#f26d7d"/><rect x="157" y="37" width="11" height="11" fill="#ed1c24"/><rect x="169" y="37" width="11" height="11" fill="#f26522"/><rect x="181" y="37" width="11" height="11" fill="#f7941d"/><rect x="193" y="37" width="11" height="11" fill="#fff200"/><rect x="1" y="49" width="11" height="11" fill="#8dc63f"/><rect x="13" y="49" width="11" height="11" fill="#39b54a"/><rect x="25" y="49" width="11" height="11" fill="#00a651"/><rect x="37" y="49" width="11" height="11" fill="#00a99d"/><rect x="49" y="49" width="11" height="11" fill="#00aeef"/><rect x="61" y="49" width="11" height="11" fill="#0072bc"/><rect x="73" y="49" width="11" height="11" fill="#0054a6"/><rect x="85" y="49" width="11" height="11" fill="#2e3192"/><rect x="97" y="49" width="11" height="11" fill="#662d91"/><rect x="109" y="49" width="11" height="11" fill="#92278f"/><rect x="121" y="49" width="11" height="11" fill="#ec008c"/><rect x="133" y="49" width="11" height="11" fill="#ed145b"/><rect x="145" y="49" width="11" height="11" fill="#9e0b0f"/><rect x="157" y="49" width="11" height="11" fill="#a0410d"/><rect x="169" y="49" width="11" height="11" fill="#a36209"/><rect x="181" y="49" width="11" height="11" fill="#aba000"/><rect x="193" y="49" width="11" height="11" fill="#598527"/><rect x="1" y="61" width="11" height="11" fill="#197b30"/><rect x="13" y="61" width="11" height="11" fill="#007236"/><rect x="25" y="61" width="11" height="11" fill="#00746b"/><rect x="37" y="61" width="11" height="11" fill="#0076a3"/><rect x="49" y="61" width="11" height="11" fill="#004b80"/><rect x="61" y="61" width="11" height="11" fill="#003471"/><rect x="73" y="61" width="11" height="11" fill="#1b1464"/><rect x="85" y="61" width="11" height="11" fill="#440e62"/><rect x="97" y="61" width="11" height="11" fill="#630460"/><rect x="109" y="61" width="11" height="11" fill="#9e005d"/><rect x="121" y="61" width="11" height="11" fill="#9e0039"/><rect x="133" y="61" width="11" height="11" fill="#790000"/><rect x="145" y="61" width="11" height="11" fill="#7b2e00"/><rect x="157" y="61" width="11" height="11" fill="#7d4900"/><rect x="169" y="61" width="11" height="11" fill="#827b00"/><rect x="181" y="61" width="11" height="11" fill="#406618"/><rect x="193" y="61" width="11" height="11" fill="#005e20"/><rect x="1" y="73" width="11" height="11" fill="#005826"/><rect x="13" y="73" width="11" height="11" fill="#005952"/><rect x="25" y="73" width="11" height="11" fill="#005b7f"/><rect x="37" y="73" width="11" height="11" fill="#003663"/><rect x="49" y="73" width="11" height="11" fill="#002157"/><rect x="61" y="73" width="11" height="11" fill="#0d004c"/><rect x="73" y="73" width="11" height="11" fill="#32004b"/><rect x="85" y="73" width="11" height="11" fill="#4b0049"/><rect x="97" y="73" width="11" height="11" fill="#7b0046"/><rect x="109" y="73" width="11" height="11" fill="#7a0026"/><rect x="121" y="73" width="11" height="11" fill="#c7b299"/><rect x="133" y="73" width="11" height="11" fill="#998675"/><rect x="145" y="73" width="11" height="11" fill="#736357"/><rect x="157" y="73" width="11" height="11" fill="#534741"/><rect x="169" y="73" width="11" height="11" fill="#37302d"/><rect x="181" y="73" width="11" height="11" fill="#c69c6e"/><rect x="193" y="73" width="11" height="11" fill="#a67c52"/><rect x="1" y="85" width="11" height="11" fill="#8c6239"/><rect x="13" y="85" width="11" height="11" fill="#754c24"/><rect x="25" y="85" width="11" height="11" fill="#603913"/><rect x="37" y="85" width="11" height="11" fill="#fffaa5"/><rect x="49" y="85" width="11" height="11" fill="#b0b53a"/><rect x="61" y="85" width="11" height="11" fill="#1e9bb5"/><rect x="73" y="85" width="11" height="11" fill="#80cfa9"/><rect x="85" y="85" width="11" height="11" fill="#43b88a"/><rect x="97" y="85" width="11" height="11" fill="#f5d55a"/><rect x="109" y="85" width="11" height="11" fill="#d1ab3c"/><rect x="121" y="85" width="11" height="11" fill="#85d1b2"/><rect x="133" y="85" width="11" height="11" fill="#3a9f73"/><rect x="145" y="85" width="11" height="11" fill="#f28a5a"/><rect x="157" y="85" width="11" height="11" fill="#e05a28"/><rect x="169" y="85" width="11" height="11" fill="#6c6a90"/><rect x="181" y="85" width="11" height="11" fill="#35325a"/><rect x="193" y="85" width="11" height="11" fill="#2b4482"/><rect x="1" y="97" width="11" height="11" fill="#e04428"/></svg>
<div class="a" style="left:1141px;top:272px;width:225px;height:18px;background:#535353;border-top:1px solid #5e5e5e"></div>
<svg style="left:1141px;top:272px" width="225" height="18"><path d="M156 5h10v10h-6l-4-4z" fill="#cfcfcf"/><path d="M156 11l4 4v-4z" fill="#8a8a8a"/><path d="M156 11h4v4" fill="none" stroke="#3a3a3a" stroke-width=".8"/><g fill="none" stroke="#9a9a9a" stroke-width="1.1"><path d="M183.5 6h13M188.0 6v-1.5h4v1.5"/><path d="M185.5 7.5l1 8.5h7l1-8.5"/><path d="M188.3 9v5.5M190.0 9v5.5M191.7 9v5.5" stroke-width=".9"/></g><rect x="222" y="6" width="1.2" height="1.2" fill="#8a8a8a"/><rect x="222" y="9" width="1.2" height="1.2" fill="#8a8a8a"/><rect x="219" y="9" width="1.2" height="1.2" fill="#8a8a8a"/><rect x="222" y="12" width="1.2" height="1.2" fill="#8a8a8a"/><rect x="219" y="12" width="1.2" height="1.2" fill="#8a8a8a"/><rect x="216" y="12" width="1.2" height="1.2" fill="#8a8a8a"/><rect x="222" y="15" width="1.2" height="1.2" fill="#8a8a8a"/><rect x="219" y="15" width="1.2" height="1.2" fill="#8a8a8a"/><rect x="216" y="15" width="1.2" height="1.2" fill="#8a8a8a"/><rect x="213" y="15" width="1.2" height="1.2" fill="#8a8a8a"/></svg>
<div class="a" style="left:1141px;top:290px;width:225px;height:3px;background:#2e2e2e"></div>

<div class="a" style="left:1141px;top:293px;width:225px;height:17px;background:#3c3c3c"></div>
<div class="a" style="left:1142px;top:293px;width:57px;height:17px;background:#444"></div>
<div class="a" style="left:1199px;top:293px;width:40px;height:18px;background:#535353"></div>
<span class="a" style="left:1149px;top:296px;font-size:10px;color:#b8b8b8">Channels</span>
<span class="a" style="left:1206px;top:296px;font-size:10px;color:#fafafa">Paths</span>
<svg style="left:1345px;top:296px" width="18" height="11"><path d="M1 4h5l-2.5 3z" fill="#d8d8d8"/><path d="M7 1.5h9M7 4.5h9M7 7.5h9M7 10.5h9" stroke="#d8d8d8" stroke-width="1.2"/></svg>
<div class="a" style="left:1141px;top:310px;width:225px;height:180px;background:#474747;border-top:1px solid #5a5a5a"></div>
<div class="a" style="left:1349px;top:311px;width:15px;height:179px;background:#3f3f3f"></div>
<div class="a" style="left:1141px;top:490px;width:225px;height:18px;background:#535353;border-top:1px solid #5e5e5e"></div>
<svg style="left:1141px;top:490px" width="225" height="18"><circle cx="25" cy="9.5" r="5" fill="#7a7a7a"/><circle cx="52.5" cy="9.5" r="4.6" fill="#555" stroke="#9a9a9a" stroke-width="1.2"/><rect x="76.5" y="5" width="9" height="9" fill="none" stroke="#a8a8a8" stroke-width="1.1" stroke-dasharray="2 1.5"/><circle cx="107" cy="9.5" r="4.5" fill="none" stroke="#a0a0a0" stroke-width="1.1"/><g fill="#555" stroke="#a0a0a0" stroke-width=".9"><rect x="105.7" y="3.7" width="2.6" height="2.6"/><rect x="105.7" y="12.7" width="2.6" height="2.6"/><rect x="101.2" y="8.2" width="2.6" height="2.6"/><rect x="110.2" y="8.2" width="2.6" height="2.6"/></g><rect x="128" y="4" width="13" height="11" fill="#c8c8c8"/><rect x="128" y="4" width="13" height="1" fill="#333"/><circle cx="134.5" cy="9.5" r="2.6" fill="#4a4a4a"/><path d="M160 4.5h10v10h-6l-4-4z" fill="#cfcfcf"/><path d="M160 10.5l4 4v-4z" fill="#8a8a8a"/><path d="M160 10.5h4v4" fill="none" stroke="#3a3a3a" stroke-width=".8"/><g fill="none" stroke="#9a9a9a" stroke-width="1.1"><path d="M183.5 5.5h13M188.0 5.5v-1.5h4v1.5"/><path d="M185.5 7.0l1 8.5h7l1-8.5"/><path d="M188.3 8.5v5.5M190.0 8.5v5.5M191.7 8.5v5.5" stroke-width=".9"/></g><rect x="222" y="5" width="1.2" height="1.2" fill="#8a8a8a"/><rect x="222" y="8" width="1.2" height="1.2" fill="#8a8a8a"/><rect x="219" y="8" width="1.2" height="1.2" fill="#8a8a8a"/><rect x="222" y="11" width="1.2" height="1.2" fill="#8a8a8a"/><rect x="219" y="11" width="1.2" height="1.2" fill="#8a8a8a"/><rect x="216" y="11" width="1.2" height="1.2" fill="#8a8a8a"/><rect x="222" y="14" width="1.2" height="1.2" fill="#8a8a8a"/><rect x="219" y="14" width="1.2" height="1.2" fill="#8a8a8a"/><rect x="216" y="14" width="1.2" height="1.2" fill="#8a8a8a"/><rect x="213" y="14" width="1.2" height="1.2" fill="#8a8a8a"/></svg>
<div class="a" style="left:1141px;top:508px;width:225px;height:3px;background:#2e2e2e"></div>

<div class="a" style="left:1141px;top:511px;width:225px;height:16px;background:#3c3c3c"></div>
<div class="a" style="left:1142px;top:511px;width:43px;height:17px;background:#535353"></div>
<span class="a" style="left:1149px;top:514px;font-size:10px;color:#fafafa">Layers</span>
<svg style="left:1345px;top:514px" width="18" height="11"><path d="M1 4h5l-2.5 3z" fill="#d8d8d8"/><path d="M7 1.5h9M7 4.5h9M7 7.5h9M7 10.5h9" stroke="#d8d8d8" stroke-width="1.2"/></svg>
<div class="a" style="left:1141px;top:527px;width:225px;height:87px;background:#535353"></div>
<div class="a" style="left:1141px;top:555px;width:225px;height:1px;background:#3e3e3e"></div><div class="a" style="left:1141px;top:556px;width:225px;height:1px;background:#5c5c5c"></div>
<div class="a" style="left:1141px;top:583px;width:225px;height:1px;background:#3e3e3e"></div><div class="a" style="left:1141px;top:584px;width:225px;height:1px;background:#5c5c5c"></div>
<div class="a" style="left:1141px;top:612px;width:225px;height:2px;background:#3e3e3e"></div>
<div class="a" style="left:1147px;top:533px;width:69px;height:19px;background:linear-gradient(#626262,#575757);border:1px solid #3a3a3a;border-radius:3px"></div>
<svg style="left:1153px;top:537px" width="12" height="12"><circle cx="7" cy="5" r="3.2" fill="none" stroke="#d0d0d0" stroke-width="1.3"/><path d="M4.5 7.5L1.5 10.5" stroke="#d0d0d0" stroke-width="1.6"/></svg>
<span class="a" style="left:1168px;top:536px;font-size:10px;color:#ececec">Kind</span>
<svg style="left:1206px;top:537px" width="7" height="11"><path d="M0.5 4L3.5 0.5L6.5 4ZM0.5 6.5L3.5 10L6.5 6.5Z" fill="#e0e0e0"/></svg>
<svg style="left:1225px;top:533px" width="140" height="20">
<rect x="3.5" y="3.5" width="12" height="10" fill="none" stroke="#bdbdbd"/><path d="M5 12l3-4 2 2 2-3 3 5z" fill="#bdbdbd"/><circle cx="12.5" cy="6" r="1" fill="#bdbdbd"/>
<circle cx="33" cy="8.5" r="5.5" fill="#bdbdbd"/><path d="M29 12.5l8-8a5.5 5.5 0 0 1-8 8z" fill="#535353"/>
<text x="51" y="14" font-size="14" font-family="Liberation Serif" font-weight="bold" fill="#bdbdbd">T</text>
<rect x="77.5" y="3.5" width="10" height="10" fill="none" stroke="#bdbdbd" stroke-width="1.2"/><circle cx="77.5" cy="3.5" r="1.5" fill="#535353" stroke="#bdbdbd"/><circle cx="87.5" cy="3.5" r="1.5" fill="#535353" stroke="#bdbdbd"/><circle cx="77.5" cy="13.5" r="1.5" fill="#535353" stroke="#bdbdbd"/><circle cx="87.5" cy="13.5" r="1.5" fill="#535353" stroke="#bdbdbd"/>
<path d="M104 3h5l3 3v8h-8z" fill="none" stroke="#bdbdbd"/><rect x="100" y="8" width="6" height="7" fill="#bdbdbd"/>
<rect x="125" y="1" width="9" height="16" fill="#3a3a3a"/><rect x="125" y="1" width="9" height="8" fill="#7a7a7a"/>
</svg>
<div class="a" style="left:1147px;top:561px;width:109px;height:19px;background:linear-gradient(#626262,#575757);border:1px solid #3a3a3a;border-radius:3px"></div>
<span class="a" style="left:1154px;top:564px;font-size:10px;color:#ececec">Darken</span>
<svg style="left:1246px;top:565px" width="7" height="11"><path d="M0.5 4L3.5 0.5L6.5 4ZM0.5 6.5L3.5 10L6.5 6.5Z" fill="#e0e0e0"/></svg>
<span class="a" style="left:1264px;top:563px;font-size:10px;color:#ececec">Opacity:</span>
<div class="a" style="left:1306px;top:561px;width:54px;height:18px;background:#3a3a3a;border:1px solid #333;border-radius:3px"></div>
<div class="a" style="left:1341px;top:561px;width:19px;height:18px;background:linear-gradient(#6a6a6a,#5a5a5a);border:1px solid #3a3a3a;border-radius:0 3px 3px 0"></div>
<span class="a" style="left:1312px;top:564px;font-size:10px;color:#ececec">100%</span>
<svg style="left:1346px;top:568px" width="8" height="5"><path d="M0 0h7l-3.5 4z" fill="#e8e8e8"/></svg>
<span class="a" style="left:1148px;top:592px;font-size:10px;color:#ececec">Lock:</span>
<svg style="left:1178px;top:588px" width="120" height="20">
<rect x="3" y="3" width="11" height="11" fill="#9a9a9a"/><path d="M3 3h3v3h-3zM9 3h3v3h-3zM6 6h3v3h-3zM12 6h2v3h-2zM3 9h3v3h-3zM9 9h3v3h-3zM6 12h3v2h-3zM12 12h2v2h-2z" fill="#dcdcdc"/>
<path d="M26 14l10-11" stroke="#c8c8c8" stroke-width="2.2"/><path d="M23 16c2 0 5-1 5-3l-2-2c-2 1-2 3-3 5z" fill="#c8c8c8"/>
<path d="M52 2v14M45 9h14M50 4l2-2 2 2M50 14l2 2 2-2M47 7l-2 2 2 2M57 7l2 2-2 2" fill="none" stroke="#c8c8c8" stroke-width="1.2"/>
<rect x="68" y="8" width="11" height="8" fill="#c8c8c8"/><path d="M70 8v-2a3.5 3.5 0 0 1 7 0v2" fill="none" stroke="#c8c8c8" stroke-width="1.5"/>
</svg>
<span class="a" style="left:1286px;top:592px;font-size:10px;color:#ececec">Fill:</span>
<div class="a" style="left:1306px;top:589px;width:54px;height:18px;background:#3a3a3a;border:1px solid #333;border-radius:3px"></div>
<div class="a" style="left:1341px;top:589px;width:19px;height:18px;background:linear-gradient(#6a6a6a,#5a5a5a);border:1px solid #3a3a3a;border-radius:0 3px 3px 0"></div>
<span class="a" style="left:1312px;top:592px;font-size:10px;color:#ececec">100%</span>
<svg style="left:1346px;top:596px" width="8" height="5"><path d="M0 0h7l-3.5 4z" fill="#e8e8e8"/></svg>
<div class="a" style="left:1141px;top:614px;width:225px;height:95px;background:#474747"></div>
<div class="a" style="left:1141px;top:614px;width:32px;height:35px;background:#535353;border-bottom:1px solid #3a3a3a"></div>
<div class="a" style="left:1173px;top:614px;width:177px;height:35px;background:#596578;border-bottom:1px solid #3a3a3a"></div>
<div class="a" style="left:1350px;top:614px;width:14px;height:95px;background:#3f3f3f"></div>
<svg style="left:1150px;top:625px" width="16" height="12"><path d="M1 6c3-5 11-5 14 0c-3 5-11 5-14 0z" fill="#c8c8c8"/><circle cx="8" cy="6" r="2.8" fill="#535353"/><circle cx="8" cy="6" r="1.2" fill="#c8c8c8"/></svg>

<svg style="left:1173px;top:614px" width="38" height="34"><defs><pattern id="chk" width="8" height="8" patternUnits="userSpaceOnUse" x="4.5" y="4"><rect width="8" height="8" fill="#fff"/><rect width="4" height="4" fill="#d2d2d2"/><rect x="4" y="4" width="4" height="4" fill="#d2d2d2"/></pattern></defs><rect x="3.5" y="3.5" width="31" height="27" fill="url(#chk)" stroke="#000" stroke-width="1.6"/><g transform="translate(-7.6,-2.6) scale(0.048)"><use href="#letters"/><use href="#letters" x="8" y="4"/></g><path d="M1.5 13V1.5H13M25 1.5H36.5V13M36.5 21V32.5H25M13 32.5H1.5V21" fill="none" stroke="#fff" stroke-width="1.6"/></svg>
<span class="a" style="left:1218px;top:627px;font-size:10px;color:#f0f0f0">Layer 0</span>
<div class="a" style="left:1141px;top:709px;width:225px;height:17px;background:#535353;border-top:1px solid #5e5e5e"></div>
<svg style="left:1141px;top:709px" width="225" height="17">
<path d="M23 10h6M25 7h-2a3 3 0 0 0 0 6h2M27 7h2a3 3 0 0 1 0 6h-2" fill="none" stroke="#9a9a9a" stroke-width="1.6"/>
<text x="49" y="15" font-size="14" font-style="italic" font-family="Liberation Serif" fill="#c8c8c8">fx</text><path d="M64 14h3l-1.5 2z" fill="#ddd"/>
<rect x="76" y="5" width="13" height="10" fill="#c8c8c8"/><circle cx="82.5" cy="10" r="3" fill="#535353"/>
<circle cx="109" cy="10" r="5.5" fill="#c8c8c8"/><path d="M105 14l8-8a5.5 5.5 0 0 1-8 8z" fill="#535353"/><path d="M115 14h3l-1.5 2z" fill="#ddd"/>
<path d="M129 6h5l1 1h7v8h-13z" fill="#c8c8c8"/>
<path d="M157 4h10v10h-6l-4-4z" fill="#cfcfcf"/><path d="M157 10l4 4v-4z" fill="#8a8a8a"/><path d="M157 10h4v4" fill="none" stroke="#3a3a3a" stroke-width=".8"/>
<g fill="none" stroke="#9a9a9a" stroke-width="1.1"><path d="M184 5.5h13M188.5 5.5v-1.5h4v1.5"/><path d="M186 7.0l1 8.5h7l1-8.5"/><path d="M188.8 8.5v5.5M190.5 8.5v5.5M192.2 8.5v5.5" stroke-width=".9"/></g>
</svg>

</body></html>
